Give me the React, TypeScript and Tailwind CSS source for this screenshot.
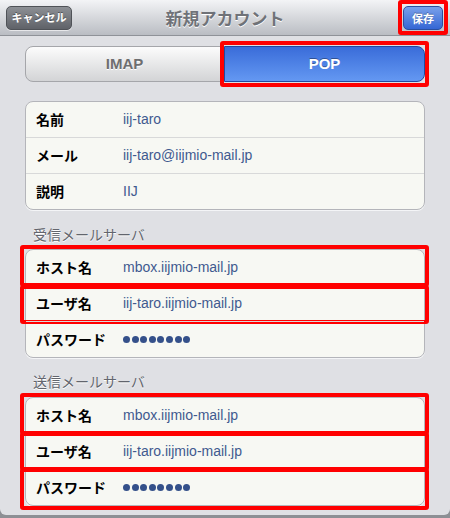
const jp = "font-['Noto_Sans_CJK_JP',sans-serif]";
const latin = "font-['Liberation_Sans','Noto_Sans_CJK_JP',sans-serif]";

type Row = { label: string; value?: string; password?: boolean; mark?: string };

const account: Row[] = [
  { label: "名前", value: "iij-taro" },
  { label: "メール", value: "iij-taro@iijmio-mail.jp" },
  { label: "説明", value: "IIJ" },
];

const incoming: Row[] = [
  { label: "ホスト名", value: "mbox.iijmio-mail.jp", mark: "-top-[5px] -bottom-[2px]" },
  { label: "ユーザ名", value: "iij-taro.iijmio-mail.jp", mark: "-top-[1px] -bottom-[3px]" },
  { label: "パスワード", password: true },
];

const outgoing: Row[] = [
  { label: "ホスト名", value: "mbox.iijmio-mail.jp", mark: "-top-[5px] -bottom-[2px]" },
  { label: "ユーザ名", value: "iij-taro.iijmio-mail.jp", mark: "-top-[2px] -bottom-[2px]" },
  { label: "パスワード", password: true, mark: "-top-[2px] -bottom-[5px]" },
];

function Dots() {
  return (
    <div className="flex gap-[1.6px]">
      {Array.from({ length: 8 }).map((_, i) => (
        <span key={i} className="h-[7px] w-[7px] rounded-full bg-[#34508a]" />
      ))}
    </div>
  );
}

function Group({ rows }: { rows: Row[] }) {
  return (
    <div className="mx-[25px] rounded-[8px] border border-[#b4b5ba] bg-[#f7f8f3] shadow-[0_1px_0_#f4f5f7]">
      {rows.map((row, i) => (
        <div
          key={row.label}
          className={`relative flex items-center pl-[10px] ${i > 0 ? "h-[36px] border-t border-[#d8d9d9]" : "h-[35px]"}`}
        >
          <span className={`w-[87px] text-[14px] font-bold text-black ${jp}`}>{row.label}</span>
          {row.password ? (
            <Dots />
          ) : (
            <span className={`text-[14px] text-[#3f5a8f] ${latin}`}>{row.value}</span>
          )}
          {row.mark && (
            <span
              className={`pointer-events-none absolute -left-[6px] -right-[5px] rounded-[3px] border-4 border-[#ff0000] ${row.mark}`}
            />
          )}
        </div>
      ))}
    </div>
  );
}

function Header({ children, className }: { children: string; className: string }) {
  return (
    <p
      className={`px-[33px] text-[14px] leading-[20px] text-[#62656d] [text-shadow:0_1px_0_#fff] ${jp} ${className}`}
    >
      {children}
    </p>
  );
}

export default function App() {
  return (
    <div className="h-[518px] w-[450px] overflow-hidden bg-[#8d8f94]">
      <div className="flex h-[515px] flex-col rounded-b-[6px] bg-[#dfe0e4]">
        <div className="grid h-[36px] shrink-0 grid-cols-[1fr_auto_1fr] items-center border-b border-[#8f9298] bg-gradient-to-b from-[#f3f4f6] to-[#babdc3] px-[6px]">
          <button
            className={`h-[24px] w-[66px] justify-self-start rounded-[5px] border border-[#4f5257] bg-gradient-to-b from-[#8d9095] to-[#5f6268] text-[11px] font-bold text-white shadow-[0_1px_0_rgba(255,255,255,0.6)] [text-shadow:0_-1px_0_rgba(0,0,0,0.4)] ${jp}`}
          >
            キャンセル
          </button>
          <h1 className={`text-[17px] font-bold text-[#6f7278] [text-shadow:0_1px_0_#fff] ${jp}`}>
            新規アカウント
          </h1>
          <div className="relative justify-self-end mr-[1px]">
            <button
              className={`h-[24px] w-[40px] rounded-[5px] border border-[#2b4f9e] bg-gradient-to-b from-[#7aa0ea] to-[#3466d4] text-[11px] font-bold text-white [text-shadow:0_-1px_0_rgba(0,0,0,0.3)] ${jp}`}
            >
              保存
            </button>
            <span className="pointer-events-none absolute -left-[5px] -right-[5px] -top-[5px] -bottom-[5px] rounded-[3px] border-4 border-[#ff0000]" />
          </div>
        </div>

        <div className="mx-[25px] mt-[10px] flex h-[36px] shrink-0">
          <div
            className={`flex w-[199px] items-center justify-center rounded-l-[8px] border border-[#a5a6aa] bg-gradient-to-b from-[#fcfcfc] to-[#d3d4d6] text-[15px] font-bold text-[#6e6e70] [text-shadow:0_1px_0_#fff] ${latin}`}
          >
            IMAP
          </div>
          <div className="relative flex-1">
            <div
              className={`flex h-full items-center justify-center rounded-r-[8px] border border-[#234a9e] bg-gradient-to-b from-[#3a6cd9] to-[#6498f2] text-[15px] font-bold text-white [text-shadow:0_-1px_0_rgba(0,0,0,0.35)] ${latin}`}
            >
              POP
            </div>
            <span className="pointer-events-none absolute -left-[4px] -right-[4px] -top-[5px] -bottom-[5px] rounded-[3px] border-4 border-[#ff0000]" />
          </div>
        </div>

        <div className="mt-[19px]">
          <Group rows={account} />
        </div>
        <Header className="pt-[14px] pb-[5px]">受信メールサーバ</Header>
        <Group rows={incoming} />
        <Header className="pt-[13px] pb-[6px]">送信メールサーバ</Header>
        <Group rows={outgoing} />
      </div>
    </div>
  );
}
